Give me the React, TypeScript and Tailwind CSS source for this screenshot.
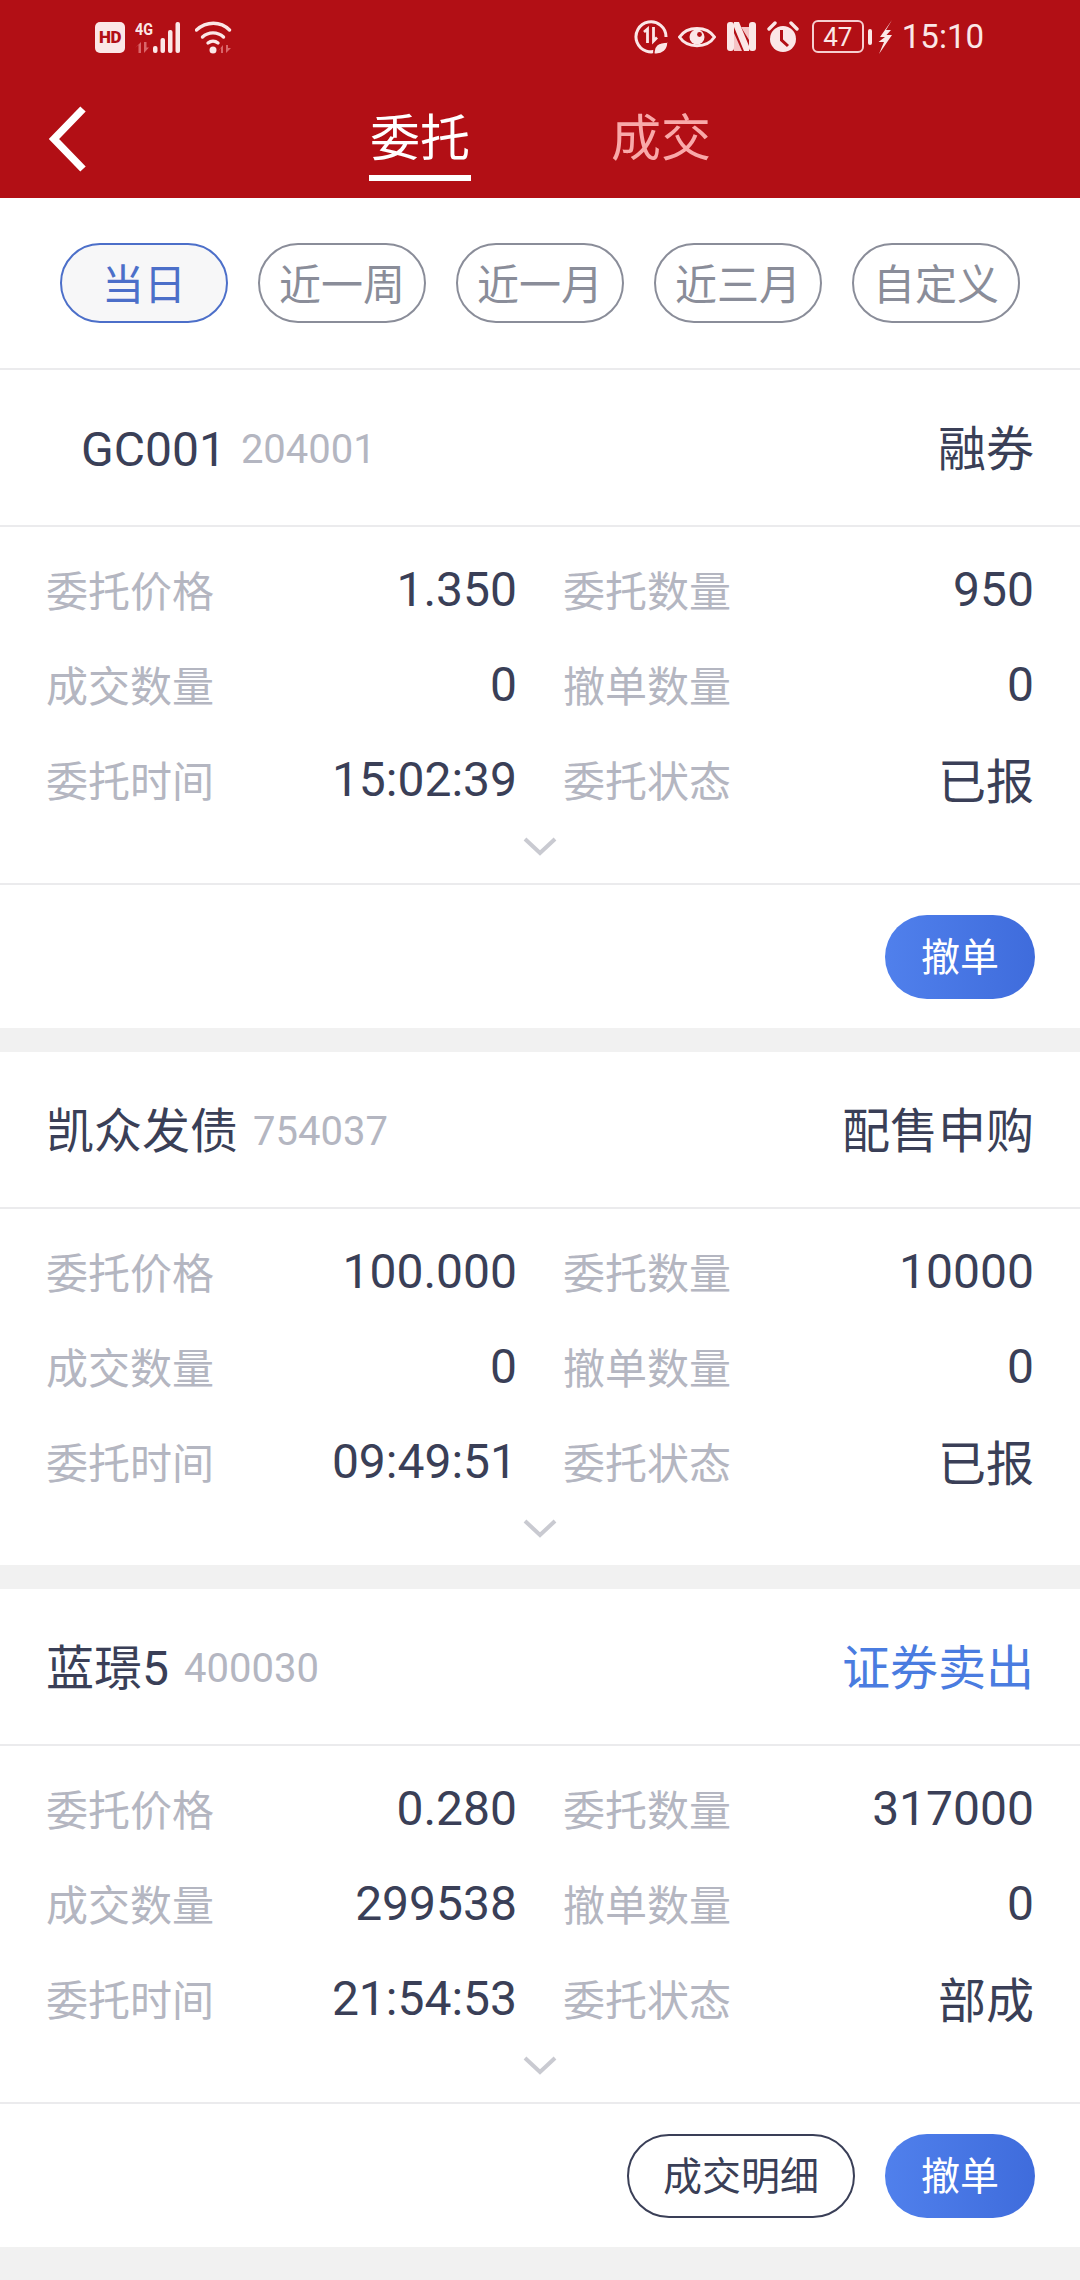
const FONT = "font-['Roboto','Noto_Sans_CJK_SC',sans-serif]";

type Order = {
  name: string;
  code: string;
  kind: string;
  kindBlue?: boolean;
  indent?: boolean;
  price: string;
  qty: string;
  filled: string;
  cancelled: string;
  time: string;
  status: string;
  actions: string[];
};

const ORDERS: Order[] = [
  { name: "GC001", code: "204001", kind: "融券", indent: true, price: "1.350", qty: "950", filled: "0", cancelled: "0", time: "15:02:39", status: "已报", actions: ["撤单"] },
  { name: "凯众发债", code: "754037", kind: "配售申购", price: "100.000", qty: "10000", filled: "0", cancelled: "0", time: "09:49:51", status: "已报", actions: [] },
  { name: "蓝璟5", code: "400030", kind: "证券卖出", kindBlue: true, price: "0.280", qty: "317000", filled: "299538", cancelled: "0", time: "21:54:53", status: "部成", actions: ["成交明细", "撤单"] },
];

const RANGES = ["当日", "近一周", "近一月", "近三月", "自定义"];

function LeftStatus() {
  return (
    <div className="flex items-center ml-[95px]">
      <span className="w-[30px] h-[31px] rounded-[5px] bg-[#fbe7e7] text-[#b20f15] text-[17px] leading-none font-black tracking-[-0.5px] flex items-center justify-center">HD</span>
      <svg width="50" height="37" viewBox="0 -4 50 37" className="ml-[10px] -mt-[4px]">
        <text x="0" y="14" fontSize="17" fontWeight="700" fill="#fbe7e7" fontFamily="Roboto" textLength="18" lengthAdjust="spacingAndGlyphs">4G</text>
        <path d="M6 21v11h-2.500v-8L0 27zM9 21v11l5-5.500H11.500V21z" fill="#d9666a" />
        <rect x="18" y="25" width="4.500" height="7" rx="2" fill="#fbe7e7" />
        <rect x="25.500" y="17" width="4.500" height="15" rx="2" fill="#fbe7e7" />
        <rect x="33" y="9" width="4.500" height="23" rx="2" fill="#fbe7e7" />
        <rect x="40.500" y="1" width="4.500" height="31" rx="2" fill="#fbe7e7" />
      </svg>
      <svg width="38" height="33" viewBox="0 0 38 33" className="ml-[10px]">
        <g fill="none" stroke="#fbe7e7" strokeWidth="3.400" strokeLinecap="round">
          <path d="M1.500 9c10-9 24-9 33 0" />
          <path d="M7.500 16c6-5.500 15-5.500 21 0" />
          <path d="M13 22c3-2.500 7-2.500 10 0" />
        </g>
        <circle cx="18" cy="29" r="3.500" fill="#fbe7e7" />
        <path d="M28 24v8h-2v-5l-3 3zM31 24v8l5-5h-3v-3z" fill="#d9666a" />
      </svg>
    </div>
  );
}

function RightStatus() {
  return (
    <div className="flex items-center mr-[96px] -mt-[2px]">
      <svg width="34" height="34" viewBox="0 0 34 34">
        <path d="M25 29.500A15 15 0 1 1 32 17" fill="none" stroke="#fbe7e7" strokeWidth="3" />
        <path d="M10 12l3.500-3v14" fill="none" stroke="#fbe7e7" strokeWidth="2.800" />
        <path d="M19.500 7v14l3.500-3.500" fill="none" stroke="#fbe7e7" strokeWidth="2.800" />
        <path d="M20 34c-1-8 4-12 14-12 0 8-5 13-14 12z" fill="#fbe7e7" stroke="#b20f15" strokeWidth="1.500" />
      </svg>
      <svg width="38" height="28" viewBox="0 0 38 28" className="ml-[10px]">
        <path d="M1.500 14C9 2.500 29 2.500 36.500 14 29 25.500 9 25.500 1.500 14z" fill="none" stroke="#fbe7e7" strokeWidth="3" />
        <circle cx="19" cy="14" r="7.500" fill="#fbe7e7" />
        <circle cx="21.500" cy="11.500" r="2.400" fill="#b20f15" />
      </svg>
      <svg width="29" height="29" viewBox="0 0 29 29" className="ml-[11px]">
        <rect x="0" y="0" width="7" height="29" rx="3" fill="#fbe7e7" />
        <rect x="22" y="0" width="7" height="29" rx="3" fill="#fbe7e7" />
        <path d="M7 0h5l10 24v5h-5L7 5z" fill="#fbe7e7" />
        <path d="M14 5h8v13zM7 11l8 18H7z" fill="#f5c4c6" />
      </svg>
      <svg width="32" height="33" viewBox="0 0 32 33" className="ml-[11px]">
        <circle cx="16" cy="19" r="13" fill="#fbe7e7" />
        <path d="M14.500 10v10l6.500 6" fill="none" stroke="#b20f15" strokeWidth="3" />
        <path d="M2 9l6-6M30 9l-6-6" stroke="#fbe7e7" strokeWidth="3.400" strokeLinecap="round" />
      </svg>
      <div className="flex items-center ml-[13px]">
        <span className="flex items-center justify-center w-[52px] h-[33px] rounded-[6px] border-[2px] border-[#f6cfd0] text-[26px] leading-none text-[#fbe7e7]">47</span>
        <span className="ml-[4px] w-[4px] h-[16px] rounded-sm bg-[#fbe7e7]" />
      </div>
      <svg width="14" height="34" viewBox="0 0 14 34" className="ml-[6px]">
        <path d="M14 0L2 17h5L0.500 22H6L1 34 14 15H8.500L13 10H8z" fill="#fbe7e7" />
      </svg>
      <span className="ml-[10px] text-[33px] leading-none text-[#fbe7e7]">15:10</span>
    </div>
  );
}

function Header() {
  return (
    <header className="h-[198px] bg-[#b20f15] flex flex-col">
      <div className="h-[75px] flex items-center justify-between">
        <LeftStatus />
        <RightStatus />
      </div>
      <div className="relative flex-1 flex justify-center">
        <svg width="44" height="70" viewBox="0 0 44 70" className="absolute left-[46px] top-[29px]">
          <path d="M37 5L8 35l29 30" fill="none" stroke="#ffffff" strokeWidth="7.500" />
        </svg>
        <div className="flex gap-[140px] pt-[33px]">
          <div className="flex flex-col items-center">
            <span className="text-[50px] leading-[62px] text-white">委托</span>
            <span className="w-[102px] h-[6px] mt-[5px] bg-white" />
          </div>
          <span className="text-[50px] leading-[62px] text-[#f9a9a9]">成交</span>
        </div>
      </div>
    </header>
  );
}

function RangeFilter() {
  return (
    <div className="h-[172px] border-b-2 border-[#ebebed] flex items-center justify-center gap-[30px]">
      {RANGES.map((label, i) => (
        <span
          key={label}
          className={
            i === 0
              ? "w-[168px] h-[80px] pt-[4px] rounded-full border-2 border-[#4c6fc9] bg-[#f7f7f8] text-[#4c6fc9] text-[42px] flex items-center justify-center"
              : "w-[168px] h-[80px] pt-[4px] rounded-full border-2 border-[#8a8d99] text-[#8a8d99] text-[42px] flex items-center justify-center"
          }
        >
          {label}
        </span>
      ))}
    </div>
  );
}

function Field({ label, value }: { label: string; value: string }) {
  const numeric = /^[0-9]/.test(value);
  return (
    <div className="flex-1 flex items-center justify-between h-[95px]">
      <span className="text-[42px] text-[#b4b6c1]">{label}</span>
      <span className={`text-[48px] text-[#3a3f57] ${numeric ? "pb-[5px]" : ""}`}>{value}</span>
    </div>
  );
}

function OrderCard({ order }: { order: Order }) {
  return (
    <section className="bg-white">
      <div className={`h-[155px] pt-[5px] flex items-center justify-between pr-[46px] ${order.indent ? "pl-[81px]" : "pl-[46px]"}`}>
        <div className="flex items-center">
          <span className="text-[48px] text-[#3a3f57]">{order.name}</span>
          <span className="ml-[15px] text-[40px] text-[#b4b6c1]">{order.code}</span>
        </div>
        <span className={`text-[48px] ${order.kindBlue ? "text-[#4a7ce0]" : "text-[#3a3f57]"}`}>{order.kind}</span>
      </div>
      <div className="border-t-2 border-[#ebebed] px-[46px] pt-[18px] h-[358px]">
        <div className="flex gap-[46px]">
          <Field label="委托价格" value={order.price} />
          <Field label="委托数量" value={order.qty} />
        </div>
        <div className="flex gap-[46px]">
          <Field label="成交数量" value={order.filled} />
          <Field label="撤单数量" value={order.cancelled} />
        </div>
        <div className="flex gap-[46px]">
          <Field label="委托时间" value={order.time} />
          <Field label="委托状态" value={order.status} />
        </div>
        <div className="flex justify-center pt-[6px]">
          <svg width="34" height="20" viewBox="0 0 34 20">
            <path d="M2 3l15 14L32 3" fill="none" stroke="#c9cad1" strokeWidth="4" />
          </svg>
        </div>
      </div>
      {order.actions.length > 0 && (
        <div className="border-t-2 border-[#ebebed] h-[145px] flex items-center justify-end gap-[30px] pr-[45px]">
          {order.actions.map((action) =>
            action === "撤单" ? (
              <span key={action} className="w-[150px] h-[84px] pt-[3px] rounded-full bg-gradient-to-r from-[#5080ec] to-[#3f6cdc] text-white text-[39px] flex items-center justify-center">
                {action}
              </span>
            ) : (
              <span key={action} className="w-[228px] h-[84px] pt-[3px] rounded-full border-2 border-[#3a3f57] text-[#3a3f57] text-[39px] flex items-center justify-center">
                {action}
              </span>
            ),
          )}
        </div>
      )}
    </section>
  );
}

export default function App() {
  return (
    <div className={`w-[1080px] h-[2280px] overflow-hidden bg-[#f1f1f1] ${FONT}`}>
      <Header />
      <div className="bg-white">
        <RangeFilter />
      </div>
      <div className="flex flex-col gap-[24px]">
        {ORDERS.map((o) => (
          <OrderCard key={o.code} order={o} />
        ))}
      </div>
    </div>
  );
}
